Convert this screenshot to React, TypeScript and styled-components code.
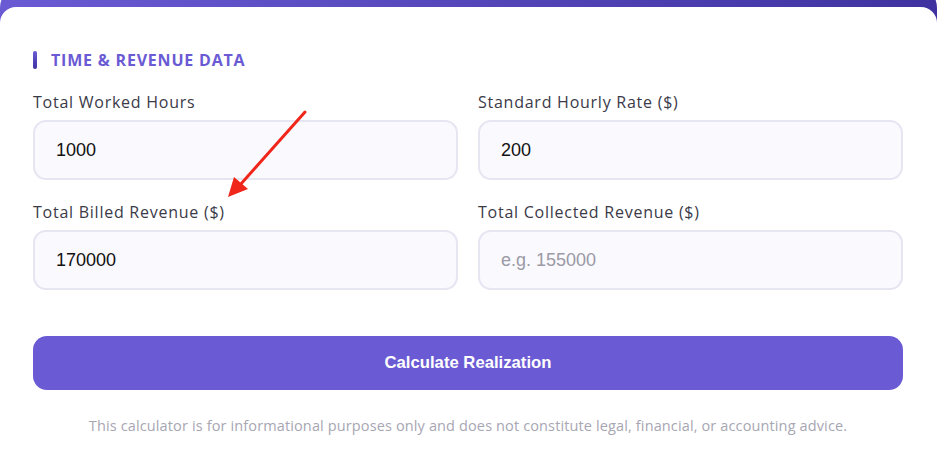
import React from 'react';
import styled, { createGlobalStyle } from 'styled-components';

const COLORS = {
  primary: '#6a5bd4',
  deep: '#3f32a0',
  text: '#3b3a48',
  border: '#e6e5f2',
  field: '#faf9fd',
  muted: '#a7a6b3',
};

const GlobalStyle = createGlobalStyle`
  html, body {
    margin: 0;
    padding: 0;
    background: #ffffff;
    overflow: hidden;
  }
  body {
    font-family: 'Open Sans', 'Liberation Sans', sans-serif;
  }
`;

const Page = styled.div`
  position: relative;
  width: 943px;
  height: 469px;
  overflow: hidden;
`;

const CardShell = styled.div`
  width: 937px;
  margin-top: -16px;
  padding-top: 23px;
  border-radius: 24px;
  background: linear-gradient(90deg, ${COLORS.primary} 0%, ${COLORS.deep} 100%);
`;

const Card = styled.div`
  background: #ffffff;
  border-radius: 16px 16px 0 0;
  padding: 43px 34px 40px 33px;
  display: flex;
  flex-direction: column;
`;

const SectionTitle = styled.h3`
  margin: 0 0 22px;
  display: flex;
  align-items: center;
  gap: 14px;
  font-size: 16px;
  line-height: 20px;
  font-weight: 700;
  letter-spacing: 0.8px;
  color: ${COLORS.primary};
  text-transform: uppercase;

  &::before {
    content: '';
    width: 4px;
    height: 18px;
    border-radius: 2px;
    background: linear-gradient(180deg, ${COLORS.primary}, ${COLORS.deep});
  }
`;

const Grid = styled.div`
  display: grid;
  grid-template-columns: 1fr 1fr;
  column-gap: 20px;
  row-gap: 22px;
`;

const Field = styled.label`
  display: flex;
  flex-direction: column;
  gap: 8px;
`;

const Label = styled.span`
  font-size: 16px;
  line-height: 20px;
  letter-spacing: 0.75px;
  color: ${COLORS.text};
`;

const Input = styled.input`
  box-sizing: border-box;
  height: 60px;
  width: 100%;
  padding: 0 21px;
  border: 2px solid ${COLORS.border};
  border-radius: 13px;
  background: ${COLORS.field};
  font-family: 'Liberation Sans', Arial, sans-serif;
  font-size: 18px;
  color: #111;
  outline: none;

  &::placeholder {
    color: #9b9aa6;
  }
`;

const Button = styled.button`
  margin-top: 46px;
  height: 54px;
  border: 0;
  border-radius: 14px;
  background: ${COLORS.primary};
  color: #ffffff;
  font-family: 'Liberation Sans', Arial, sans-serif;
  font-size: 16.7px;
  font-weight: 700;
  cursor: pointer;
`;

const Disclaimer = styled.p`
  margin: 26px 0 0;
  text-align: center;
  font-size: 14.5px;
  line-height: 20px;
  letter-spacing: 0.13px;
  color: ${COLORS.muted};
`;

const Arrow = styled.svg`
  position: absolute;
  left: 220px;
  top: 105px;
  pointer-events: none;
`;

const fields = [
  { label: 'Total Worked Hours', value: '1000', placeholder: '' },
  { label: 'Standard Hourly Rate ($)', value: '200', placeholder: '' },
  { label: 'Total Billed Revenue ($)', value: '170000', placeholder: '' },
  { label: 'Total Collected Revenue ($)', value: '', placeholder: 'e.g. 155000' },
];

export default function App() {
  return (
    <Page>
      <GlobalStyle />
      <CardShell>
        <Card>
          <SectionTitle>Time &amp; Revenue Data</SectionTitle>
          <Grid>
            {fields.map((f) => (
              <Field key={f.label}>
                <Label>{f.label}</Label>
                <Input type="number" defaultValue={f.value} placeholder={f.placeholder} />
              </Field>
            ))}
          </Grid>
          <Button>Calculate Realization</Button>
          <Disclaimer>
            This calculator is for informational purposes only and does not constitute legal, financial, or accounting advice.
          </Disclaimer>
        </Card>
      </CardShell>
      <Arrow width="95" height="100" viewBox="0 0 95 100">
        <line x1="85" y1="7" x2="20" y2="80" stroke="#f0261b" strokeWidth="3" strokeLinecap="round" />
        <polygon points="8,92 14,72 28,84" fill="#f0261b" />
      </Arrow>
    </Page>
  );
}
